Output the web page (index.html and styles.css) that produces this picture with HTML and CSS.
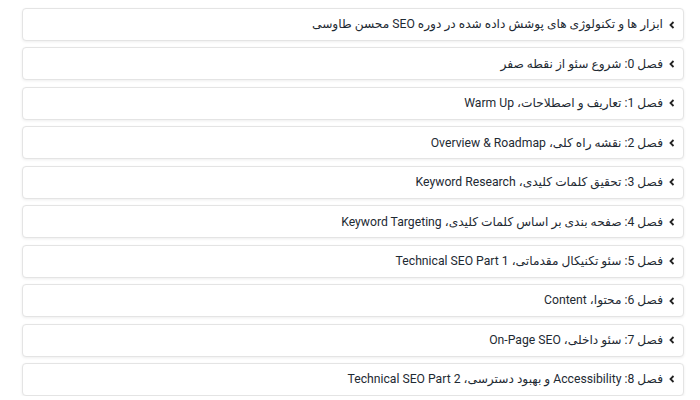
FILE: index.html
```html
<!DOCTYPE html>
<html lang="fa" dir="rtl">
<head>
<meta charset="utf-8">
<link rel="stylesheet" href="styles.css">
</head>
<body>
<div class="list">
  <div class="item"><svg class="chev" viewBox="0 0 6 8" width="6" height="8"><path d="M4.5 1 L1.5 4 L4.5 7" fill="none" stroke="#222" stroke-width="1.8"/></svg><span class="title">ابزار ها و تکنولوژی های پوشش داده شده در دوره SEO محسن طاوسی</span></div>
  <div class="item"><svg class="chev" viewBox="0 0 6 8" width="6" height="8"><path d="M4.5 1 L1.5 4 L4.5 7" fill="none" stroke="#222" stroke-width="1.8"/></svg><span class="title">فصل 0: شروع سئو از نقطه صفر</span></div>
  <div class="item"><svg class="chev" viewBox="0 0 6 8" width="6" height="8"><path d="M4.5 1 L1.5 4 L4.5 7" fill="none" stroke="#222" stroke-width="1.8"/></svg><span class="title">فصل 1: تعاریف و اصطلاحات، Warm Up</span></div>
  <div class="item"><svg class="chev" viewBox="0 0 6 8" width="6" height="8"><path d="M4.5 1 L1.5 4 L4.5 7" fill="none" stroke="#222" stroke-width="1.8"/></svg><span class="title">فصل 2: نقشه راه کلی، Overview &amp; Roadmap</span></div>
  <div class="item"><svg class="chev" viewBox="0 0 6 8" width="6" height="8"><path d="M4.5 1 L1.5 4 L4.5 7" fill="none" stroke="#222" stroke-width="1.8"/></svg><span class="title">فصل 3: تحقیق کلمات کلیدی، Keyword Research</span></div>
  <div class="item"><svg class="chev" viewBox="0 0 6 8" width="6" height="8"><path d="M4.5 1 L1.5 4 L4.5 7" fill="none" stroke="#222" stroke-width="1.8"/></svg><span class="title">فصل 4: صفحه بندی بر اساس کلمات کلیدی، Keyword Targeting</span></div>
  <div class="item"><svg class="chev" viewBox="0 0 6 8" width="6" height="8"><path d="M4.5 1 L1.5 4 L4.5 7" fill="none" stroke="#222" stroke-width="1.8"/></svg><span class="title">فصل 5: سئو تکنیکال مقدماتی، Technical SEO Part 1</span></div>
  <div class="item"><svg class="chev" viewBox="0 0 6 8" width="6" height="8"><path d="M4.5 1 L1.5 4 L4.5 7" fill="none" stroke="#222" stroke-width="1.8"/></svg><span class="title">فصل 6: محتوا، Content</span></div>
  <div class="item"><svg class="chev" viewBox="0 0 6 8" width="6" height="8"><path d="M4.5 1 L1.5 4 L4.5 7" fill="none" stroke="#222" stroke-width="1.8"/></svg><span class="title">فصل 7: سئو داخلی، On-Page SEO</span></div>
  <div class="item"><svg class="chev" viewBox="0 0 6 8" width="6" height="8"><path d="M4.5 1 L1.5 4 L4.5 7" fill="none" stroke="#222" stroke-width="1.8"/></svg><span class="title">فصل 8: Accessibility و بهبود دسترسی، Technical SEO Part 2</span></div>
</div>
</body>
</html>
```
FILE: styles.css
```css
html, body {
  margin: 0;
  padding: 0;
  background: #ffffff;
}
body {
  font-family: Roboto, "DejaVu Sans", sans-serif;
  color: #1e2a33;
  overflow: hidden;
}
.list {
  display: flex;
  flex-direction: column;
  gap: 6.44px;
  padding: 8px 16px 0 0;
  margin-left: 22px;
}
.item {
  display: flex;
  align-items: center;
  gap: 6px;
  height: 33px;
  box-sizing: border-box;
  padding: 0 8px 0 0;
  border: 1px solid #e4e4e4;
  border-radius: 4px;
  box-shadow: 0 1px 3px rgba(0, 0, 0, 0.07);
  background: #fff;
}
.chev {
  flex: none;
}
.title {
  font-size: 12.2px;
  line-height: 1;
  white-space: nowrap;
}
```
